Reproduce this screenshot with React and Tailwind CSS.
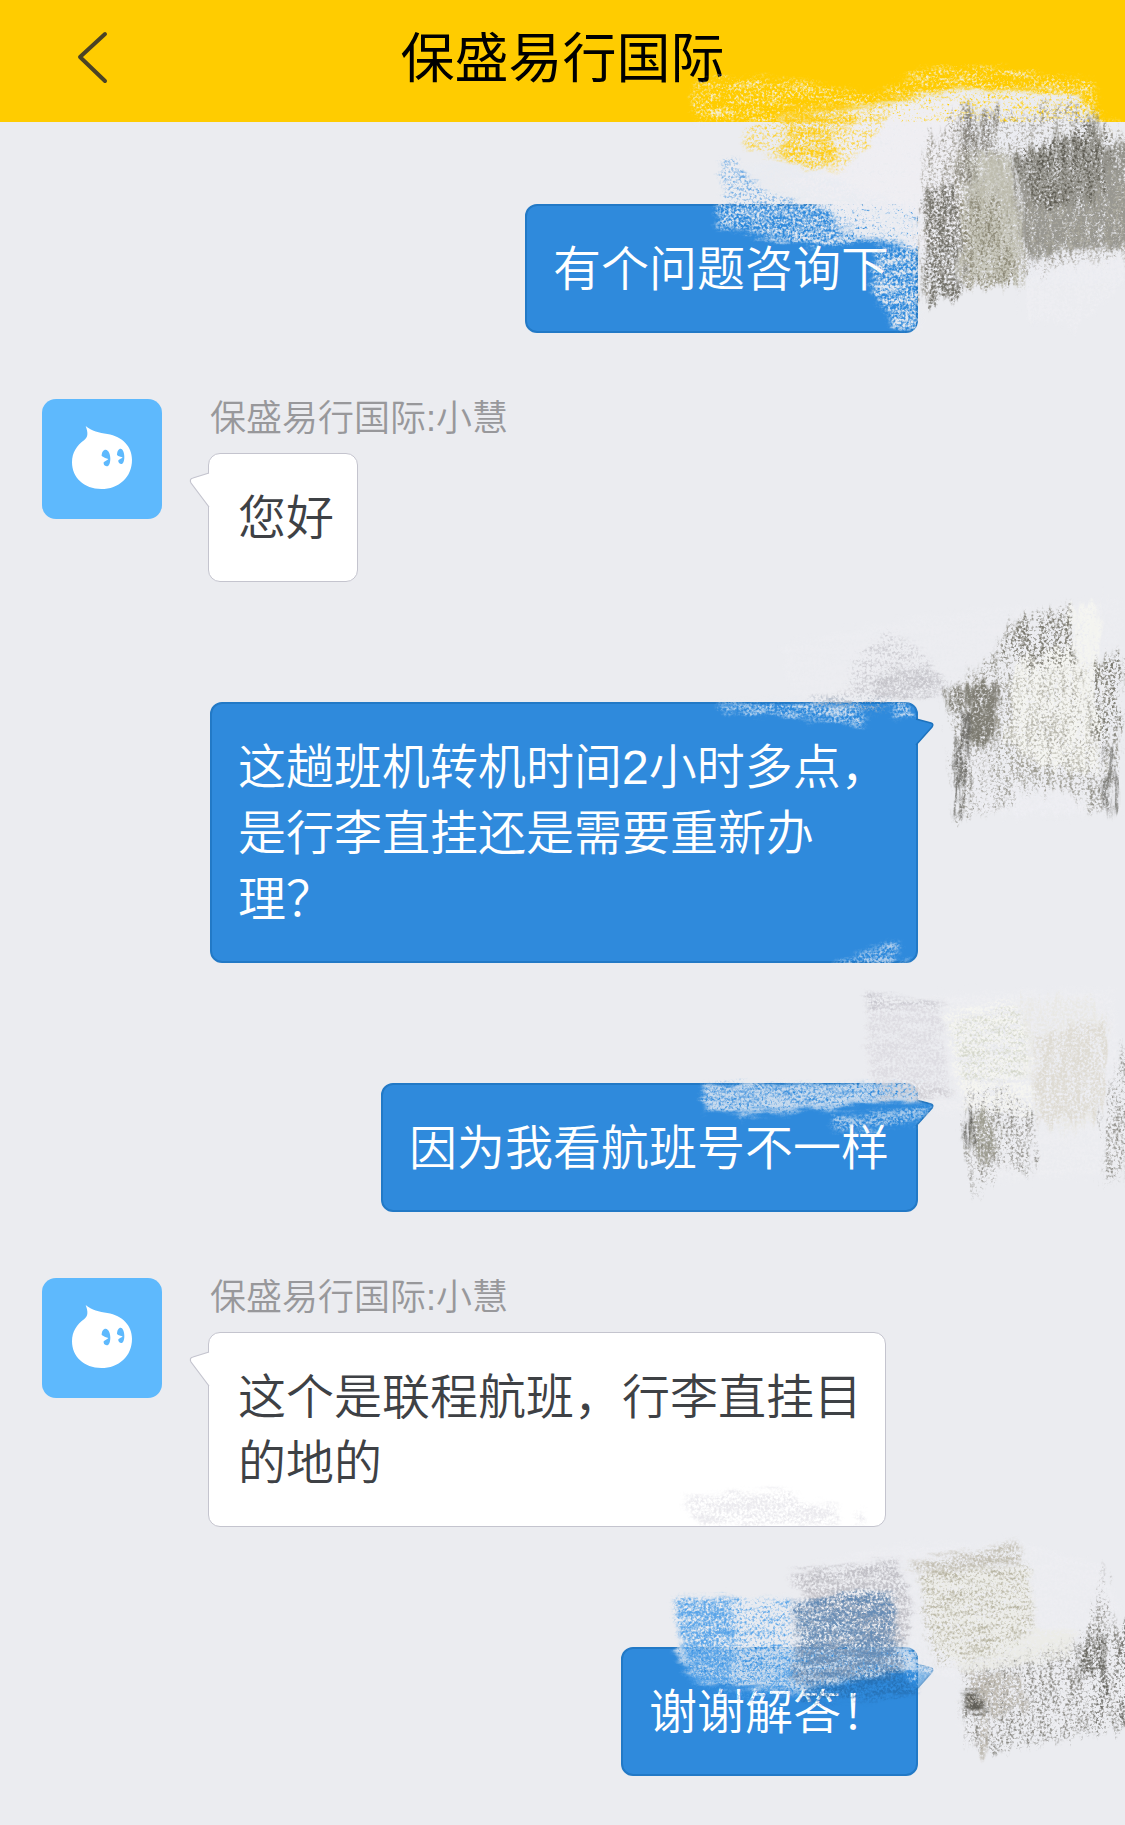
import React from "react";

const GRAINS = [
  { id: "h-solid", streak: "0.012 0.05", push: 44, gain: 4, cut: -1.05 },
  { id: "h-mid", streak: "0.012 0.05", push: 44, gain: 4, cut: -1.5 },
  { id: "h-thin", streak: "0.012 0.05", push: 44, gain: 4, cut: -1.85 },
  { id: "v-solid", streak: "0.05 0.01", push: 80, gain: 4, cut: -1.05 },
  { id: "v-mid", streak: "0.05 0.01", push: 80, gain: 4, cut: -1.5 },
  { id: "v-thin", streak: "0.05 0.01", push: 80, gain: 4, cut: -1.85 },
];

function CrayonFilters() {
  return (
    <svg className="absolute h-0 w-0" aria-hidden="true">
      <defs>
        {GRAINS.map((g, i) => (
          <filter
            key={g.id}
            id={`crayon-${g.id}`}
            filterUnits="userSpaceOnUse"
            x="-40"
            y="-40"
            width="1480"
            height="1080"
            colorInterpolationFilters="sRGB"
          >
            <feTurbulence type="fractalNoise" baseFrequency="0.13" numOctaves="2" seed={i + 3} result="grain" />
            <feTurbulence type="fractalNoise" baseFrequency={g.streak} numOctaves="3" seed={i + 11} result="streak" />
            <feComposite in="grain" in2="streak" operator="arithmetic" k1="0" k2="0.68" k3="0.32" k4="0" result="mix" />
            <feColorMatrix in="mix" type="matrix" values={`0 0 0 0 0  0 0 0 0 0  0 0 0 0 0  0 0 0 ${g.gain} ${g.cut}`} result="mask" />
            <feGaussianBlur in="SourceGraphic" stdDeviation="8" result="soft" />
            <feDisplacementMap in="soft" in2="streak" scale={g.push} xChannelSelector="R" yChannelSelector="G" result="ragged" />
            <feComposite in="ragged" in2="mask" operator="in" result="marked" />
            <feGaussianBlur in="marked" stdDeviation="1" />
          </filter>
        ))}
      </defs>
    </svg>
  );
}

/* Each mark: [grain, fill, opacity, outline] */
const FIRST = [
  ["h-thin", "#f4f1e6", 0.9, "M45 90 L290 85 L600 130 L720 60 L920 50 L1240 95 L1265 215 L1320 215 L1320 240 L40 215Z"],
  ["h-solid", "#ebecf1", 1, "M300 205 L600 160 L830 115 L1200 130 L1260 225 L1310 330 L1330 700 L740 700 L716 590 L480 545 L420 350 L300 250Z"],
  ["h-solid", "#f0eff3", 0.95, "M480 190 L850 140 L860 590 L716 590 L500 520 L300 400 L440 360Z"],
  ["h-mid", "#ffcc10", 0.95, "M280 170 L480 160 L540 225 L450 250 L470 350 L370 355 L290 320 L330 260Z"],
  ["h-thin", "#ffcc10", 0.8, "M190 250 L300 205 L640 150 L600 240 L480 360 L290 320 L190 290Z"],
  ["h-mid", "#e9ecf2", 0.95, "M130 365 L300 330 L480 390 L716 480 L716 590 L600 570 L440 590 L300 570 L110 525Z"],
  ["h-thin", "#4293df", 0.75, "M120 330 L170 330 L210 400 L440 490 L520 520 L400 550 L140 490Z"],
  ["h-mid", "#e9ecf2", 0.95, "M590 590 L716 590 L716 840 L650 845 L600 760 L575 710Z"],
  ["v-thin", "#8f8b80", 0.8, "M730 310 L850 150 L870 160 L880 220 L930 170 L1040 210 L1060 160 L1160 160 L1380 290 L1380 620 L1200 650 L730 740Z"],
  ["v-mid", "#b6b4a5", 0.95, "M835 290 L990 310 L1035 560 L1020 700 L850 715 L830 500Z"],
  ["v-solid", "#c2c1b3", 0.7, "M860 320 L985 330 L1025 560 L1010 690 L860 680Z"],
  ["v-thin", "#86826f", 0.9, "M850 450 L960 430 L1020 700 L850 715Z"],
  ["v-solid", "#7d7b71", 0.75, "M1000 330 L1060 290 L1120 300 L1150 235 L1200 260 L1240 190 L1280 300 L1335 270 L1390 590 L1130 600 L1060 640 L1030 560Z"],
  ["v-thin", "#b3b1a6", 0.9, "M1040 400 L1250 340 L1390 380 L1390 590 L1200 600 L1050 620Z"],
  ["v-thin", "#55534b", 0.9, "M1000 330 L1060 290 L1150 250 L1240 190 L1290 350 L1250 460 L1060 470Z"],
  ["v-mid", "#6b6960", 0.9, "M732 425 L835 400 L845 740 L732 760Z"],
  ["v-mid", "#77736a", 0.85, "M845 170 L880 170 L880 400 L835 400Z M905 190 L945 180 L935 300 L900 310Z"],
  ["v-mid", "#efeff3", 0.9, "M1050 650 L1335 600 L1335 690 L1190 830 L1040 800Z"],
];

const SECOND = [
  ["h-mid", "#efeff3", 0.5, "M300 200 L560 140 L900 90 L1320 60 L1320 700 L850 700 L830 350 L340 350Z"],
  ["h-thin", "#c3c2c8", 0.75, "M510 240 L620 160 L700 190 L790 290 L810 335 L560 385 L380 355 L510 330Z"],
  ["h-mid", "#bdbcc2", 0.75, "M600 275 L740 260 L790 310 L740 350 L570 350Z"],
  ["h-mid", "#dfe8f3", 0.85, "M110 370 L540 370 L565 435 L330 408 L130 392Z M635 370 L690 370 L712 408 L635 408Z"],
  ["h-thin", "#a9b7c8", 0.8, "M400 355 L640 355 L620 380 L560 400 L400 390Z"],
  ["v-thin", "#89877d", 0.85, "M810 330 L940 230 L980 130 L1060 100 L1170 80 L1170 260 L1240 250 L1320 210 L1320 460 L1290 690 L1220 690 L1130 620 L930 690 L830 720Z"],
  ["v-solid", "#f7f7f1", 0.8, "M1000 230 L1170 200 L1170 80 L1255 60 L1255 580 L1060 560 L990 480Z"],
  ["v-thin", "#77756b", 0.95, "M980 170 L1060 100 L1110 130 L1165 90 L1180 250 L1080 270 L980 240Z M1250 260 L1325 220 L1325 450 L1250 500Z"],
  ["v-thin", "#a5a397", 0.6, "M960 300 L1200 260 L1250 560 L1150 620 L950 600Z"],
  ["v-solid", "#77756a", 0.9, "M860 313 L950 313 L950 470 L895 500 L860 480Z"],
  ["v-mid", "#77756a", 0.9, "M810 330 L865 305 L865 370 L810 410Z"],
  ["v-solid", "#5a5953", 0.85, "M842 400 L866 400 L856 580 L840 715 L824 715Z M1280 500 L1298 500 L1296 695 L1278 695Z"],
  ["v-mid", "#efeff4", 0.85, "M870 520 L940 500 L940 680 L870 690Z M1000 600 L1200 640 L1200 700 L960 700Z"],
];

const SECOND_FOOT = [
  ["h-mid", "#bcd4ee", 0.9, "M40 122 L120 92 L170 64 L250 56 L230 92 L180 122Z M240 122 L265 106 L275 122Z"],
];

const THIRD = [
  ["h-mid", "#f0f0f3", 0.7, "M560 90 L880 70 L1300 60 L1330 600 L880 640 L850 430 L760 430 L760 380 L560 340Z"],
  ["h-mid", "#d3d1d8", 0.6, "M560 75 L790 105 L800 330 L820 378 L600 385 L565 300Z"],
  ["h-mid", "#b9b8c0", 0.6, "M560 72 L790 100 L790 112 L600 108 L565 130Z"],
  ["h-solid", "#e2e8f1", 0.85, "M70 345 L715 345 L715 390 L520 405 L310 425 L75 422Z"],
  ["h-thin", "#5b9fe0", 0.8, "M80 345 L660 345 L640 380 L400 410 L80 415Z"],
  ["h-mid", "#dbe5f1", 0.7, "M460 440 L760 405 L710 455 L540 485 L460 475Z M180 420 L215 420 L185 452Z M300 420 L325 420 L300 445Z"],
  ["h-mid", "#cbc9ce", 0.8, "M600 345 L820 352 L820 380 L590 388Z"],
  ["v-thin", "#85837c", 0.85, "M860 345 L950 340 L1060 420 L1050 620 L960 580 L885 685 L870 540Z M1275 430 L1335 200 L1360 560 L1300 650 L1270 620Z"],
  ["h-mid", "#f6f6f1", 0.95, "M795 125 L1005 90 L1050 200 L1060 430 L860 425 L830 330Z"],
  ["h-thin", "#d3d6c8", 0.9, "M810 160 L1010 110 L1050 200 L1040 320 L850 330Z"],
  ["v-mid", "#e9e8e3", 0.85, "M1020 90 L1240 80 L1275 150 L1260 440 L1150 500 L1060 430Z"],
  ["v-mid", "#dcd8cf", 0.8, "M1070 200 L1280 150 L1265 430 L1080 470Z"],
  ["v-mid", "#9b9a8d", 0.9, "M868 425 L955 425 L950 550 L900 600 L878 540Z"],
  ["v-solid", "#504f49", 0.9, "M856 424 L876 424 L876 530 L858 510Z"],
];

const THEIR_FOOT = [
  ["h-mid", "#e3e2e8", 0.7, "M70 80 L400 60 L410 92 L535 102 L530 165 L120 165 L75 105Z M590 130 L620 120 L610 165 L590 165Z"],
];

const FOURTH = [
  ["h-mid", "#efeff3", 0.75, "M390 300 L720 225 L1080 215 L1330 290 L1395 500 L1390 760 L910 820 L900 620 L760 600 L740 430Z"],
  ["h-solid", "#e6eaf1", 0.85, "M50 385 L400 385 L760 540 L770 600 L700 610 L400 670 L130 640 L50 570Z"],
  ["h-mid", "#4c9ee8", 0.85, "M45 388 L210 385 L230 480 L210 640 L80 630 L60 490Z"],
  ["h-thin", "#4c9ee8", 0.9, "M40 388 L390 390 L400 670 L250 690 L100 650Z"],
  ["h-mid", "#bebdc3", 0.9, "M385 310 L715 265 L755 400 L740 520 L680 530 L440 390Z"],
  ["h-mid", "#5d87b4", 0.95, "M390 400 L600 365 L705 375 L700 520 L735 590 L700 625 L390 640 L420 500Z"],
  ["h-mid", "#6a8fb8", 0.6, "M440 410 L690 390 L690 530 L730 590 L440 600Z"],
  ["h-thin", "#8b9cb3", 0.8, "M400 400 L700 380 L740 600 L400 650Z"],
  ["h-mid", "#246db0", 0.8, "M430 645 L720 600 L775 670 L560 692 L430 692Z"],
  ["h-thin", "#cfe0f1", 0.8, "M730 560 L770 570 L820 605 L775 650 L730 620Z"],
  ["v-thin", "#7b7972", 0.85, "M900 600 L1240 510 L1300 470 L1330 290 L1345 470 L1420 460 L1420 770 L1240 800 L960 850 L920 800Z"],
  ["h-solid", "#ecece6", 0.8, "M780 300 L1110 290 L1130 480 L1250 480 L1230 560 L910 610 L820 520Z"],
  ["h-mid", "#c1bdb0", 0.95, "M745 280 L1075 215 L1085 275 L900 305 L760 310Z"],
  ["h-thin", "#bab7a5", 1, "M770 305 L1110 280 L1120 490 L1000 560 L830 590 L800 480Z"],
  ["v-mid", "#5c5b53", 0.85, "M1255 530 L1335 490 L1335 600 L1255 615Z"],
  ["v-thin", "#666560", 0.95, "M1300 500 L1340 495 L1337 760 L1300 760Z M1378 470 L1420 460 L1420 760 L1378 775Z"],
  ["v-mid", "#bab5ab", 0.9, "M918 600 L1095 620 L1105 720 L990 740 L985 845 L960 845 L950 728 L918 690Z"],
  ["h-solid", "#504e46", 0.85, "M912 660 L955 675 L985 728 L945 728 L915 708Z"],
];

function Scribble({ marks, className, viewBox }) {
  return (
    <svg className={`pointer-events-none absolute z-10 ${className}`} viewBox={viewBox} aria-hidden="true">
      {marks.map(([grain, fill, opacity, d], i) => (
        <path key={i} d={d} fill={fill} opacity={opacity} filter={`url(#crayon-${grain})`} />
      ))}
    </svg>
  );
}

function Avatar() {
  return (
    <svg className="h-[120px] w-[120px] shrink-0 rounded-[14px] bg-[#5eb9fd]" viewBox="0 0 360 360" role="img" aria-label="小慧">
      <path
        fill="#fff"
        d="M131 81C149 97 172 101 196 105C242 113 270 143 270 182C270 235 230 270 178 270C126 270 90 236 90 190C90 160 105 139 127 123C138 114 139 103 131 81Z"
      />
      <g fill="#5eb9fd">
        <path d="M179 171C179 159 184 152 191 152C200 153 205 165 205 179C205 193 200 203 194 202C187 201 184 196 185 190C189 187 195 184 199 180C193 179 186 176 179 171Z" />
        <path d="M225 168C225 156 230 149 236 149C243 150 247 161 247 174C247 187 243 196 237 195C231 194 228 189 229 184C233 181 238 179 242 175C236 174 230 172 225 168Z" />
      </g>
    </svg>
  );
}

function Mine({ children, className = "", tail = true, faded = false, scribbles }) {
  return (
    <li className={`relative flex justify-end pr-[207px] pl-[210px] ${className}`}>
      <div className="relative max-w-[708px] rounded-xl border-2 border-[#2279c6] bg-[#2f8adc] pt-[31px] pr-[27px] pb-[28px] pl-[26px] text-white">
        <p>{children}</p>
        {tail && (
          <svg className={`absolute top-[14px] -right-[19px] h-[30px] w-[21px] ${faded ? "opacity-60" : ""}`} viewBox="0 0 21 30" aria-hidden="true">
            <path d="M0 1L2 1L17 5Q20 6 18 9L2 27L0 27Z" fill="#2f8adc" />
            <path d="M2 1L17 5Q20 6 18 9L2 27" fill="none" stroke="#1d72bd" strokeWidth="1.5" />
          </svg>
        )}
      </div>
      {scribbles}
    </li>
  );
}

function Theirs({ name, children, scribbles }) {
  return (
    <li className="relative mt-[66px] flex gap-[46px] pr-[207px] pl-[42px]">
      <Avatar />
      <div className="flex flex-col items-start">
        <span className="mt-[2px] ml-[2px] text-4xl/9 text-[#98989b]">{name}</span>
        <div className="relative mt-[16px] max-w-[678px] rounded-xl border border-[#c4c4ce] bg-white pt-[32px] pr-[23px] pb-[29px] pl-[29px] text-[#3e4145]">
          <p>{children}</p>
          <svg className="absolute top-[18px] -left-[20px] h-[36px] w-[21px]" viewBox="0 0 21 36" aria-hidden="true">
            <path d="M21 1L20 1L4 6Q0 7 2 11L20 35L21 35Z" fill="#fff" />
            <path d="M20 1L4 6Q0 7 2 11L20 35" fill="none" stroke="#c4c4ce" strokeWidth="1.2" />
          </svg>
        </div>
      </div>
      {scribbles}
    </li>
  );
}

export default function App() {
  return (
    <div className="min-h-screen overflow-hidden bg-[#ebecf0] font-['Liberation_Sans','Noto_Sans_CJK_SC',sans-serif] font-[350]" lang="zh-CN">
      <CrayonFilters />
      <header className="grid h-[122px] grid-cols-[1fr_auto_1fr] items-center bg-[#ffcc00] pb-[6px]">
        <button type="button" aria-label="返回" className="ml-[74px] h-14 w-9 cursor-pointer">
          <svg className="h-14 w-9" viewBox="0 0 36 56" fill="none" stroke="#4b4325" strokeWidth="4" strokeLinecap="round" strokeLinejoin="round" aria-hidden="true">
            <path d="M31 4L6 27L31 51" />
          </svg>
        </button>
        <h1 className="pt-[2px] text-[54px]/[72px] font-normal text-black">保盛易行国际</h1>
      </header>
      <main>
        <ol className="flex flex-col pt-[82px] pb-12 text-5xl/[66px]">
          <Mine
            tail={false}
            scribbles={<Scribble marks={FIRST} viewBox="0 0 1335 900" className="-top-[154px] right-0 h-[300px] w-[445px]" />}
          >
            有个问题咨询下
          </Mine>
          <Theirs name="保盛易行国际:小慧">您好</Theirs>
          <Mine
            className="mt-[120px]"
            scribbles={
              <>
                <Scribble marks={SECOND} viewBox="0 0 1335 780" className="-top-[122px] right-0 h-[260px] w-[445px]" />
                <Scribble marks={SECOND_FOOT} viewBox="0 0 300 114" className="right-[207px] bottom-0 h-[38px] w-[100px]" />
              </>
            }
          >
            这趟班机转机时间2小时多点，是行李直挂还是需要重新办理？
          </Mine>
          <Mine
            className="mt-[120px]"
            scribbles={<Scribble marks={THIRD} viewBox="0 0 1335 750" className="-top-[113px] right-0 h-[250px] w-[445px]" />}
          >
            因为我看航班号不一样
          </Mine>
          <Theirs
            name="保盛易行国际:小慧"
            scribbles={<Scribble marks={THEIR_FOOT} viewBox="0 0 675 168" className="right-[240px] bottom-[1px] h-[56px] w-[225px]" />}
          >
            这个是联程航班，行李直挂目的地的
          </Theirs>
          <Mine
            className="mt-[120px]"
            faded
            scribbles={<Scribble marks={FOURTH} viewBox="0 0 1395 960" className="-top-[177px] right-0 h-[320px] w-[465px]" />}
          >
            谢谢解答！
          </Mine>
        </ol>
      </main>
    </div>
  );
}
